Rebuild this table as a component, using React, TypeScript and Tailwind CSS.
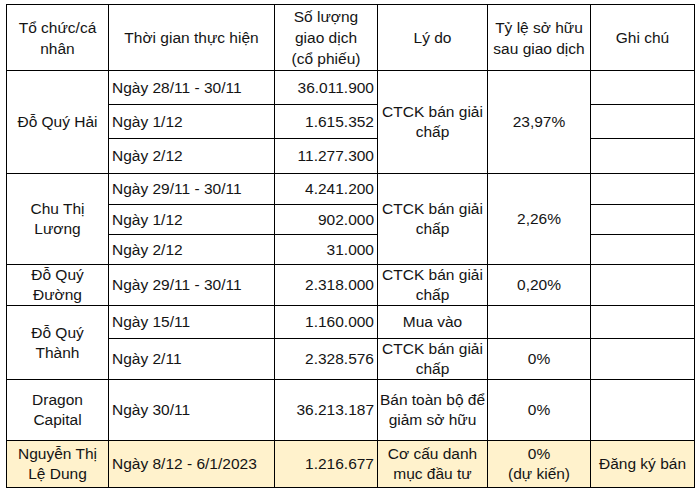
import React from 'react'

type Row = {
  name?: React.ReactNode
  nameSpan?: number
  date: string
  qty: string
  reason?: React.ReactNode
  reasonSpan?: number
  ratio?: React.ReactNode
  ratioSpan?: number
  note?: string
  h: number
  hl?: boolean
}

const rows: Row[] = [
  { name: 'Đỗ Quý Hải', nameSpan: 3, date: 'Ngày 28/11 - 30/11', qty: '36.011.900', reason: <>CTCK bán giải<br />chấp</>, reasonSpan: 3, ratio: '23,97%', ratioSpan: 3, h: 34 },
  { date: 'Ngày 1/12', qty: '1.615.352', h: 34 },
  { date: 'Ngày 2/12', qty: '11.277.300', h: 35 },
  { name: <>Chu Thị<br />Lương</>, nameSpan: 3, date: 'Ngày 29/11 - 30/11', qty: '4.241.200', reason: <>CTCK bán giải<br />chấp</>, reasonSpan: 3, ratio: '2,26%', ratioSpan: 3, h: 31 },
  { date: 'Ngày 1/12', qty: '902.000', h: 30 },
  { date: 'Ngày 2/12', qty: '31.000', h: 30 },
  { name: <>Đỗ Quý<br />Đường</>, nameSpan: 1, date: 'Ngày 29/11 - 30/11', qty: '2.318.000', reason: <>CTCK bán giải<br />chấp</>, reasonSpan: 1, ratio: '0,20%', ratioSpan: 1, h: 41 },
  { name: <>Đỗ Quý<br />Thành</>, nameSpan: 2, date: 'Ngày 15/11', qty: '1.160.000', reason: 'Mua vào', reasonSpan: 1, ratio: '', ratioSpan: 1, h: 33 },
  { date: 'Ngày 2/11', qty: '2.328.576', reason: <>CTCK bán giải<br />chấp</>, reasonSpan: 1, ratio: '0%', ratioSpan: 1, h: 41 },
  { name: <>Dragon<br />Capital</>, nameSpan: 1, date: 'Ngày 30/11', qty: '36.213.187', reason: <>Bán toàn bộ để<br />giảm sở hữu</>, reasonSpan: 1, ratio: '0%', ratioSpan: 1, h: 61 },
  { name: <>Nguyễn Thị<br />Lệ Dung</>, nameSpan: 1, date: 'Ngày 8/12 - 6/1/2023', qty: '1.216.677', reason: <>Cơ cấu danh<br />mục đầu tư</>, reasonSpan: 1, ratio: <>0%<br />(dự kiến)</>, ratioSpan: 1, note: 'Đăng ký bán', h: 47, hl: true },
]

const cell = 'border border-black p-0 align-middle'

export default function App() {
  return (
    <div className="w-[700px] h-[493px] bg-white pt-[4px] pl-[6px]" style={{ fontFamily: '"Liberation Sans", Arial, sans-serif' }}>
      <table className="border-collapse table-fixed w-[688px] text-[15.5px] leading-[20px] text-[#141414]">
        <colgroup>
          <col className="w-[102px]" />
          <col className="w-[166px]" />
          <col className="w-[103px]" />
          <col className="w-[110px]" />
          <col className="w-[103px]" />
          <col className="w-[104px]" />
        </colgroup>
        <thead>
          <tr className="h-[66px] leading-[21px]">
            <th className={`${cell} font-normal text-center`}>Tổ chức/cá<br />nhân</th>
            <th className={`${cell} font-normal text-center whitespace-nowrap`}>Thời gian thực hiện</th>
            <th className={`${cell} font-normal text-center`}>Số lượng<br />giao dịch<br />(cổ phiếu)</th>
            <th className={`${cell} font-normal text-center`}>Lý do</th>
            <th className={`${cell} font-normal text-center whitespace-nowrap`}>Tỷ lệ sở hữu<br />sau giao dịch</th>
            <th className={`${cell} font-normal text-center`}>Ghi chú</th>
          </tr>
        </thead>
        <tbody>
          {rows.map((r, i) => (
            <tr key={i} className={r.hl ? 'bg-[#fff2cc]' : ''} style={{ height: r.h }}>
              {r.nameSpan !== undefined && (
                <td rowSpan={r.nameSpan} className={`${cell} text-center whitespace-nowrap`}>{r.name}</td>
              )}
              <td className={`${cell} pl-[3px] whitespace-nowrap`}>{r.date}</td>
              <td className={`${cell} pr-[3px] text-right`}>{r.qty}</td>
              {r.reasonSpan !== undefined && (
                <td rowSpan={r.reasonSpan} className={`${cell} text-center whitespace-nowrap`}>{r.reason}</td>
              )}
              {r.ratioSpan !== undefined && (
                <td rowSpan={r.ratioSpan} className={`${cell} text-center`}>{r.ratio}</td>
              )}
              <td className={`${cell} text-center whitespace-nowrap`}>{r.note}</td>
            </tr>
          ))}
        </tbody>
      </table>
    </div>
  )
}
